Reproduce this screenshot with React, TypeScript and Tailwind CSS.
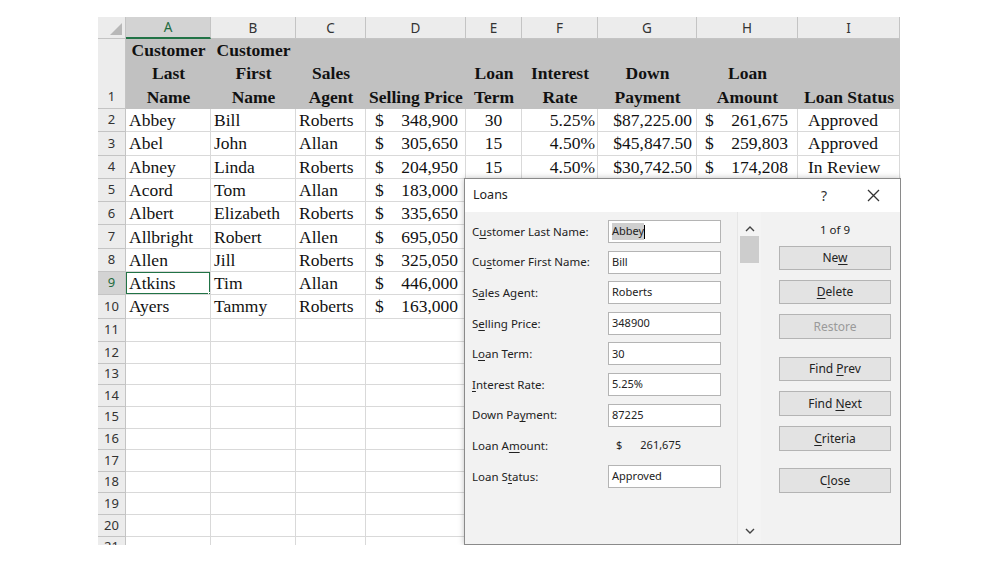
import React from "react";

const COLS = "grid-cols-[28px_85px_85px_70px_100px_56px_76px_99px_101px_102px]";

type Row = string[];
const data: Row[] = [
  ["Abbey", "Bill", "Roberts", "348,900", "30", "5.25%", "$87,225.00", "261,675", "Approved"],
  ["Abel", "John", "Allan", "305,650", "15", "4.50%", "$45,847.50", "259,803", "Approved"],
  ["Abney", "Linda", "Roberts", "204,950", "15", "4.50%", "$30,742.50", "174,208", "In Review"],
  ["Acord", "Tom", "Allan", "183,000", "", "", "", "", ""],
  ["Albert", "Elizabeth", "Roberts", "335,650", "", "", "", "", ""],
  ["Allbright", "Robert", "Allen", "695,050", "", "", "", "", ""],
  ["Allen", "Jill", "Roberts", "325,050", "", "", "", "", ""],
  ["Atkins", "Tim", "Allan", "446,000", "", "", "", "", ""],
  ["Ayers", "Tammy", "Roberts", "163,000", "", "", "", "", ""],
];

const serif = { fontFamily: '"Liberation Serif", "Times New Roman", serif' };
const uiFont = { fontFamily: '"Noto Sans", "Open Sans", sans-serif' };

function RowHead({ n, sel, h }: { n: number; sel?: boolean; h: string }) {
  return (
    <div
      className={`${h} flex items-center justify-center border-r border-b border-[#c4c4c4] text-[13px] ${
        sel ? "bg-[#d3d3d3] text-[#1e6b3e]" : "bg-[#ececec] text-[#333]"
      }`}
      style={uiFont}
    >
      {n}
    </div>
  );
}

function Cell({
  children,
  className = "",
  h,
}: {
  children?: React.ReactNode;
  className?: string;
  h: string;
}) {
  return (
    <div className={`${h} flex items-center border-r border-b border-[#d9d9d9] overflow-hidden whitespace-nowrap ${className}`}>
      {children}
    </div>
  );
}

function Money({ v, pl, pr }: { v: string; pl: string; pr: string }) {
  return (
    <div className={`flex w-full justify-between ${pl} ${pr}`}>
      <span>$</span>
      <span>{v}</span>
    </div>
  );
}

function U({ children }: { children: React.ReactNode }) {
  return <span className="underline underline-offset-2">{children}</span>;
}

function Btn({ children, disabled, className = "" }: { children: React.ReactNode; disabled?: boolean; className?: string }) {
  return (
    <div
      className={`h-[24px] w-[112px] flex items-center justify-center border border-[#b4b4b4] bg-[#e3e3e3] text-[12px] ${
        disabled ? "text-[#9a9a9a]" : "text-[#222]"
      } ${className}`}
    >
      <span className="whitespace-pre">{children}</span>
    </div>
  );
}

function Field({ label, value, sel }: { label: React.ReactNode; value?: string; sel?: boolean }) {
  return (
    <div className="h-[23px] flex items-center">
      <div className="w-[136px] text-[11.5px] text-[#222]">{label}</div>
      {value !== undefined ? (
        <div className="h-[23px] w-[113px] border border-[#b4b4b4] bg-white flex items-center px-[3px] text-[11px] text-[#222]">
          {sel ? (
            <>
              <span className="bg-[#cfcfcf]">{value}</span>
              <span className="w-px h-[14px] bg-black" />
            </>
          ) : (
            value
          )}
        </div>
      ) : (
        <div className="flex text-[11px] text-[#222] pl-[8px] gap-[18px]">
          <span>$</span>
          <span>261,675</span>
        </div>
      )}
    </div>
  );
}

export default function App() {
  const rH = "h-[23.3px]";
  const rH2 = "h-[21.65px]";
  return (
    <div className="w-[1000px] h-[563px] bg-white overflow-hidden">
      <div className="relative ml-[98px] mt-[17px] w-[803px] h-[528px] overflow-hidden text-[#111]">
        {/* column header */}
        <div className={`grid ${COLS} h-[22px]`} style={uiFont}>
          <div className="relative bg-[#ececec] border-r border-b border-[#c4c4c4]">
            <svg className="absolute right-[3px] bottom-[3px]" width="12" height="12">
              <polygon points="12,0 12,12 0,12" fill="#b8b8b8" />
            </svg>
          </div>
          {["A", "B", "C", "D", "E", "F", "G", "H", "I"].map((c, i) => (
            <div
              key={c}
              className={`flex items-center justify-center border-r text-[13.5px] ${
                i === 0
                  ? "bg-[#d3d3d3] text-[#1e6b3e] border-[#c4c4c4] border-b-2 border-b-[#217346]"
                  : "bg-[#ececec] text-[#333] border-[#c4c4c4] border-b"
              }`}
            >
              {c}
            </div>
          ))}
        </div>

        {/* header row 1 */}
        <div className={`grid ${COLS} h-[70px]`} style={serif}>
          <div className="bg-[#ececec] border-r border-b border-[#c4c4c4] flex items-end justify-center pb-[2px] text-[13px] text-[#333]" style={uiFont}>
            1
          </div>
          {[
            ["Customer", "Last", "Name"],
            ["Customer", "First", "Name"],
            ["Sales", "Agent"],
            ["Selling Price"],
            ["Loan", "Term"],
            ["Interest", "Rate"],
            ["Down", "Payment"],
            ["Loan", "Amount"],
            ["Loan Status"],
          ].map((lines, i) => (
            <div
              key={i}
              className="bg-[#c1c1c1] flex flex-col justify-end items-center font-bold text-[17.5px] leading-[23.3px] whitespace-nowrap"
            >
              {lines.map((l, j) => (
                <span key={j}>{l}</span>
              ))}
            </div>
          ))}
        </div>

        {/* data rows */}
        {data.map((r, idx) => (
          <div key={idx} className={`grid ${COLS}`} style={serif}>
            <div style={uiFont}>
              <RowHead n={idx + 2} sel={idx === 7} h={rH} />
            </div>
            <Cell h={rH} className={`text-[17.5px] pl-[3px] relative`}>
              {r[0]}
              {idx === 7 && (
                <>
                  <div className="absolute inset-[-1px] border-2 border-[#217346]" />
                  <div className="absolute right-[-3px] bottom-[-3px] w-[5px] h-[5px] bg-[#217346] border border-white" />
                </>
              )}
            </Cell>
            <Cell h={rH} className="text-[17.5px] pl-[3px]">{r[1]}</Cell>
            <Cell h={rH} className="text-[17.5px] pl-[3px]">{r[2]}</Cell>
            <Cell h={rH} className="text-[17.5px]">
              <Money v={r[3]} pl="pl-[9px]" pr="pr-[7px]" />
            </Cell>
            <Cell h={rH} className="text-[17.5px] justify-center">{r[4]}</Cell>
            <Cell h={rH} className="text-[17.5px] justify-end pr-[2px]">{r[5]}</Cell>
            <Cell h={rH} className="text-[17.5px] justify-end pr-[4px]">{r[6]}</Cell>
            <Cell h={rH} className="text-[17.5px]">
              {r[7] && <Money v={r[7]} pl="pl-[8px]" pr="pr-[9px]" />}
            </Cell>
            <Cell h={rH} className="text-[17.5px] pl-[10px]">{r[8]}</Cell>
          </div>
        ))}
        {/* row 11 */}
        <div className={`grid ${COLS}`}>
          <RowHead n={11} h={rH} />
          {Array.from({ length: 9 }).map((_, i) => (
            <Cell key={i} h={rH} />
          ))}
        </div>
        {Array.from({ length: 10 }).map((_, k) => (
          <div key={k} className={`grid ${COLS}`}>
            <RowHead n={12 + k} h={rH2} />
            {Array.from({ length: 9 }).map((_, i) => (
              <Cell key={i} h={rH2} />
            ))}
          </div>
        ))}

        {/* Loans dialog */}
        <div
          className="absolute left-[366px] top-[161px] w-[437px] h-[367px] border border-[#8a8a8a] bg-[#f2f2f2] shadow-[0_0_6px_rgba(0,0,0,0.25)] flex flex-col"
          style={uiFont}
        >
          <div className="h-[33px] bg-white flex items-center pl-[8px] pr-[20px] shrink-0">
            <span className="text-[12.5px] text-[#222]">Loans</span>
            <span className="ml-auto text-[14px] text-[#333] mr-[40px]">?</span>
            <svg width="13" height="13" viewBox="0 0 13 13">
              <path d="M1 1 L12 12 M12 1 L1 12" stroke="#333" strokeWidth="1.3" />
            </svg>
          </div>
          <div className="flex flex-1">
            <div className="w-[272px] pl-[7px] pt-[8px] flex flex-col gap-[7.6px]">
              <Field label={<>C<U>u</U>stomer Last Name:</>} value="Abbey" sel />
              <Field label={<>Cu<U>s</U>tomer First Name:</>} value="Bill" />
              <Field label={<>S<U>a</U>les Agent:</>} value="Roberts" />
              <Field label={<>S<U>e</U>lling Price:</>} value="348900" />
              <Field label={<>L<U>o</U>an Term:</>} value="30" />
              <Field label={<><U>I</U>nterest Rate:</>} value="5.25%" />
              <Field label={<>Down Pa<U>y</U>ment:</>} value="87225" />
              <Field label={<>Loan A<U>m</U>ount:</>} />
              <Field label={<>Loan S<U>t</U>atus:</>} value="Approved" />
            </div>
            <div className="w-[24px] border-l border-[#e6e6e6] bg-[#f4f4f4] flex flex-col items-center pt-[13px] pb-[9px]">
              <svg width="10" height="7" viewBox="0 0 10 7">
                <path d="M1 6 L5 2 L9 6" stroke="#444" strokeWidth="1.4" fill="none" />
              </svg>
              <div className="mt-[4px] w-[19px] h-[27px] bg-[#cdcdcd]" />
              <div className="flex-1" />
              <svg width="10" height="7" viewBox="0 0 10 7">
                <path d="M1 1 L5 5 L9 1" stroke="#444" strokeWidth="1.4" fill="none" />
              </svg>
            </div>
            <div className="ml-[18px] flex flex-col pt-[8px]">
              <div className="h-[20px] w-[112px] flex items-center justify-center text-[11.5px] text-[#222]">1 of 9</div>
              <Btn className="mt-[6px]">Ne<U>w</U></Btn>
              <Btn className="mt-[10px]"><U>D</U>elete</Btn>
              <Btn className="mt-[10px] h-[25px]" disabled>Restore</Btn>
              <Btn className="mt-[18px]">Find <U>P</U>rev</Btn>
              <Btn className="mt-[10px] h-[25px]">Find <U>N</U>ext</Btn>
              <Btn className="mt-[10px] h-[25px]"><U>C</U>riteria</Btn>
              <Btn className="mt-[17px] h-[25px]">C<U>l</U>ose</Btn>
            </div>
          </div>
        </div>
      </div>
    </div>
  );
}
